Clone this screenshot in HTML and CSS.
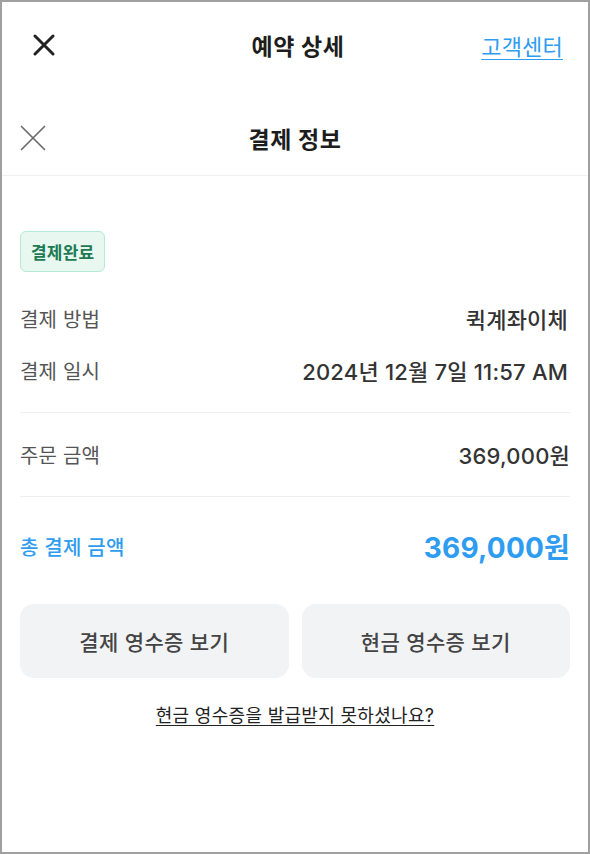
FILE: index.html
```html
<!DOCTYPE html>
<html lang="ko">
<head>
<meta charset="utf-8">
<title>예약 상세</title>
<link rel="stylesheet" href="styles.css">
</head>
<body>
<div class="frame">
  <header class="topbar">
    <button class="close-btn" aria-label="닫기">
      <svg width="22" height="22" viewBox="0 0 22 22"><path d="M2 2L20 20M20 2L2 20" stroke="#222" stroke-width="3" stroke-linecap="round"/></svg>
    </button>
    <h1 class="topbar-title">예약 상세</h1>
    <a class="help-link" href="#">고객센터</a>
  </header>

  <header class="sheet-head">
    <button class="sheet-close" aria-label="닫기">
      <svg width="26" height="26" viewBox="0 0 26 26"><path d="M1.5 1.5L24.5 24.5M24.5 1.5L1.5 24.5" stroke="#6b6b6b" stroke-width="1.7" stroke-linecap="round"/></svg>
    </button>
    <h2 class="sheet-title">결제 정보</h2>
  </header>

  <main class="content">
    <span class="badge">결제완료</span>

    <div class="rows">
      <div class="row"><span class="label">결제 방법</span><span class="value">퀵계좌이체</span></div>
      <div class="row"><span class="label">결제 일시</span><span class="value">2024년 12월 7일 11:57 AM</span></div>
    </div>
    <hr class="divider">
    <div class="row single"><span class="label">주문 금액</span><span class="value amount">369,000원</span></div>
    <hr class="divider">
    <div class="row total"><span class="total-label">총 결제 금액</span><span class="total-value">369,000원</span></div>

    <div class="actions">
      <button class="action">결제 영수증 보기</button>
      <button class="action">현금 영수증 보기</button>
    </div>
    <div class="help"><a href="#" class="help-q">현금 영수증을 발급받지 못하셨나요?</a></div>
  </main>
</div>
</body>
</html>
```

FILE: styles.css
```css
* { box-sizing: border-box; }
html, body { margin: 0; padding: 0; background: #fff; }
body {
  font-family: "Inter", "Noto Sans CJK KR", "Noto Sans", sans-serif;
  color: #222;
}
.frame {
  width: 590px;
  height: 854px;
  border: 2px solid #a0a0a0;
  background: #fff;
  overflow: hidden;
}
button {
  font-family: inherit;
  border: 0;
  background: none;
  padding: 0;
  cursor: pointer;
}
.topbar {
  height: 86px;
  display: grid;
  grid-template-columns: 1fr auto 1fr;
  align-items: center;
  padding: 0 25px 0 31px;
}
.close-btn { justify-self: start; display: flex; }
.topbar-title {
  margin: 0;
  font-size: 23px;
  font-weight: 700;
  color: #1d1d1d;
  letter-spacing: 0.6px;
}
.help-link {
  justify-self: end;
  font-size: 22px;
  color: #2e9cf0;
  text-decoration: underline;
  text-underline-offset: 4px;
  text-decoration-thickness: 1px;
  letter-spacing: 0.2px;
}
.sheet-head {
  margin-top: 12px;
  height: 76px;
  display: grid;
  grid-template-columns: 1fr auto 1fr;
  align-items: center;
  padding: 0 18px;
  border-bottom: 1px solid #f1f1f1;
}
.sheet-close { justify-self: start; display: flex; }
.sheet-title {
  margin: 0;
  font-size: 23px;
  font-weight: 700;
  color: #1d1d1d;
  letter-spacing: 0.6px;
}
.content { padding: 0 18px; }
.badge {
  display: inline-flex;
  align-items: center;
  margin-top: 55px;
  height: 41px;
  padding: 0 10px;
  border: 1.5px solid #b3ead3;
  background: #e8f8f1;
  border-radius: 6px;
  font-size: 17px;
  font-weight: 700;
  color: #1d7a55;
  letter-spacing: 0.2px;
}
.rows {
  margin-top: 32px;
  display: flex;
  flex-direction: column;
  gap: 24px;
}
.row {
  display: flex;
  justify-content: space-between;
  align-items: center;
  height: 28px;
}
.label {
  font-size: 20px;
  color: #555;
  letter-spacing: 0.2px;
}
.value {
  font-size: 22px;
  font-weight: 500;
  color: #333;
  letter-spacing: 0.2px;
  margin-right: 2px;
}
.amount { margin-right: 0; }
.divider {
  margin: 28px 0 0;
  border: 0;
  border-top: 1px solid #eeeff1;
}
.single { margin-top: 27px; }
.total {
  margin-top: 31px;
  height: 36px;
}
.total-label {
  font-size: 20px;
  font-weight: 500;
  color: #2e9cf0;
  letter-spacing: 0.3px;
}
.total-value {
  font-size: 28px;
  font-weight: 700;
  color: #2e9cf0;
  letter-spacing: 0.2px;
}
.actions {
  margin-top: 40px;
  display: grid;
  grid-template-columns: 1fr 1fr;
  gap: 13px;
}
.action {
  height: 74px;
  background: #f2f3f5;
  border-radius: 14px;
  font-size: 21px;
  font-weight: 500;
  color: #444;
  letter-spacing: 0.4px;
}
.help {
  margin-top: 26px;
  text-align: center;
  line-height: 24px;
}
.help-q {
  font-size: 18px;
  color: #222;
  text-decoration: underline;
  text-underline-offset: 3px;
  letter-spacing: 0.3px;
}
```
